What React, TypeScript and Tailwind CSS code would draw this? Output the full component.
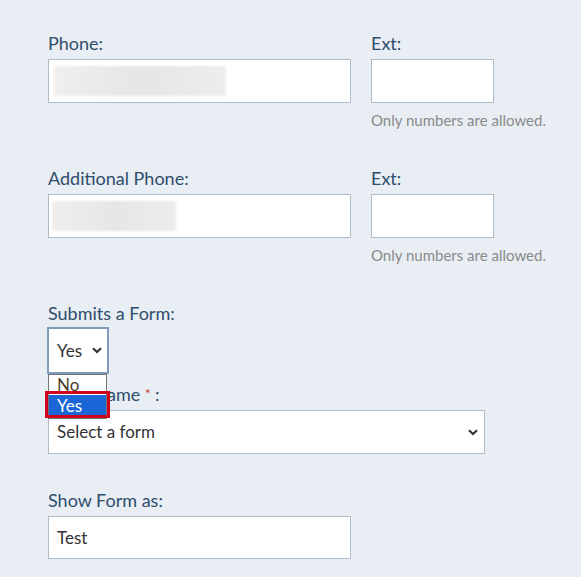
import { useState } from "react";

const fuente = { fontFamily: "Lato, 'Noto Sans', sans-serif" };

const Etiqueta = ({ children }: { children: React.ReactNode }) => (
  <label className="block text-[18px] leading-[24px] text-[#2f4d6d] mb-1">{children}</label>
);

const Borroso = ({ ancho }: { ancho: string }) => (
  <div className={`h-[30px] ${ancho} bg-gradient-to-r from-[#efefef] via-[#e6e6e6] to-[#ededed] blur-[1px]`} />
);

const Chevron = () => (
  <svg width="10" height="7" viewBox="0 0 10 7" className="shrink-0">
    <path d="M1 1.2 L5 5 L9 1.2" fill="none" stroke="#333" strokeWidth="2.2" />
  </svg>
);

const FilaTelefono = ({ titulo, ancho, relleno }: { titulo: string; ancho: string; relleno: string }) => (
  <div className="flex gap-5">
    <div className="w-[303px]">
      <Etiqueta>{titulo}</Etiqueta>
      <div className={`h-[44px] bg-white border border-[#aebbc9] flex items-center ${relleno}`}>
        <Borroso ancho={ancho} />
      </div>
    </div>
    <div>
      <Etiqueta>Ext:</Etiqueta>
      <div className="h-[44px] w-[123px] bg-white border border-[#aebbc9]" />
      <p className="mt-[7px] text-[15px] leading-[20px] text-[#8a8a8a]">Only numbers are allowed.</p>
    </div>
  </div>
);

const App = () => {
  const [enviaFormulario] = useState("Yes");

  return (
    <div className="min-h-[577px] w-full bg-[#e8eef3] pl-12 pt-[31px]" style={fuente}>
      <FilaTelefono titulo="Phone:" ancho="w-[172px]" relleno="pl-[5px]" />
      <div className="mt-[36px]">
        <FilaTelefono titulo="Additional Phone:" ancho="w-[124px]" relleno="pl-[3px]" />
      </div>

      {/* ENVIA UN FORMULARIO */}
      <div className="mt-[36px] relative">
        <label className="block text-[18px] leading-[24px] text-[#2f4d6d] mb-[2px]">Submits a Form:</label>
        <div className="h-[47px] w-[62px] bg-white border-2 border-[#7f9abb] -ml-px flex items-center justify-between pl-2 pr-[5px]">
          <span className="text-[17px] text-[#333]">{enviaFormulario}</span>
          <Chevron />
        </div>

        {/* LISTA DESPLEGADA */}
        <div className="absolute left-0 top-[73px] z-10 w-[59px] bg-white border border-[#767676]">
          <div className="h-[20px] pl-2 text-[17px] leading-[20px] text-[#4a3d2a]">No</div>
          <div className="h-[21px] mb-[2px] pl-2 text-[17px] leading-[21px] text-white bg-[#1a66d6]">Yes</div>
        </div>
        <div className="absolute -left-[3px] top-[90px] z-20 h-[27px] w-[65px] border-[3px] border-[#d0021b]" />
      </div>

      {/* NOMBRE DEL FORMULARIO */}
      <div className="mt-[8px] w-[437px]">
        <label className="block text-[18px] leading-[24px] text-[#2f4d6d] mb-1">
          Form Name <span className="text-[#c0392b] text-[13px] align-top">*</span> :
        </label>
        <div className="h-[44px] bg-white border border-[#aebbc9] flex items-center justify-between pl-2 pr-[6px]">
          <span className="text-[17px] text-[#333]">Select a form</span>
          <Chevron />
        </div>
      </div>

      {/* MOSTRAR COMO */}
      <div className="mt-[34px] w-[303px]">
        <Etiqueta>Show Form as:</Etiqueta>
        <div className="h-[43px] bg-white border border-[#aebbc9] flex items-center pl-2">
          <span className="text-[17px] text-[#333]">Test</span>
        </div>
      </div>
    </div>
  );
};

export default App;
